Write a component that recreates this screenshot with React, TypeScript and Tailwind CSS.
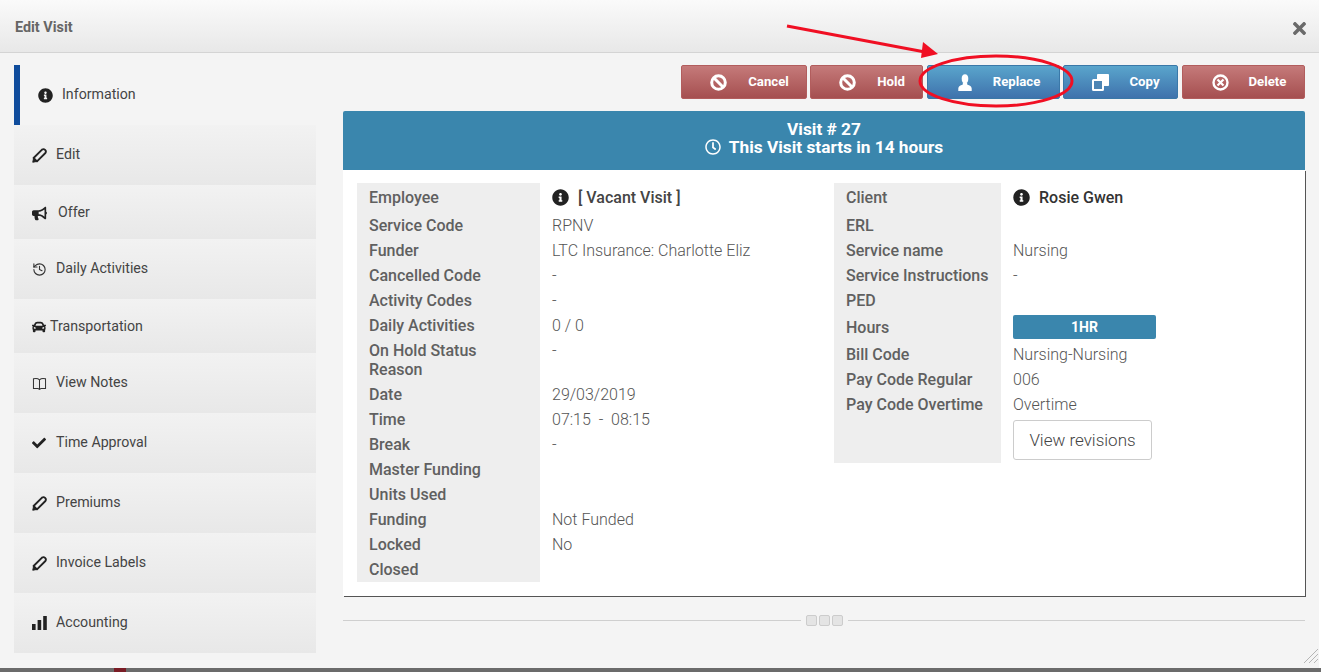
import type { ReactNode } from 'react'
import { History } from 'lucide-react'
import { FaBullhorn, FaCar, FaCheck, FaInfoCircle, FaRegClock, FaTimes } from 'react-icons/fa'

function PencilIcon() {
  return (
    <svg viewBox="0 0 16 16" className="w-[15px] h-[15px] text-[#222]" fill="none" stroke="currentColor">
      <path d="M1.7 10.7 10.7 1.700A2.600 2.600 0 0 1 14.300 5.300L5.300 14.300z" strokeWidth="2" strokeLinejoin="round" />
      <path d="M.8 15.200 1.700 10.700 5.300 14.300z" fill="currentColor" strokeWidth="1" />
    </svg>
  )
}

function BookIcon() {
  return (
    <svg viewBox="0 0 16 14" className="w-[15px] h-[13px] text-[#333]" fill="none" stroke="currentColor" strokeWidth="1.100">
      <path d="M8 3C6.500 1.600 3.500 1.400 1.500 2V12.500H6.500L8 13.300 9.500 12.500H14.500V2C12.500 1.400 9.500 1.600 8 3zM8 3V13.300" />
    </svg>
  )
}

function BarsIcon() {
  return (
    <svg viewBox="0 0 15 14" className="w-[15px] h-[14px] text-[#222]" fill="currentColor">
      <rect x="0" y="8" width="3.600" height="6" />
      <rect x="5.600" y="4" width="3.600" height="10" />
      <rect x="11.200" y="0" width="3.600" height="14" />
    </svg>
  )
}

function BanIcon() {
  return (
    <svg viewBox="0 0 17 17" className="w-[17px] h-[17px]" fill="none" stroke="white" strokeWidth="3">
      <circle cx="8.500" cy="8.500" r="6.800" />
      <path d="M4 4 13 13" />
    </svg>
  )
}

function DeleteIcon() {
  return (
    <svg viewBox="0 0 17 17" className="w-[17px] h-[17px]" fill="none" stroke="white">
      <circle cx="8.500" cy="8.500" r="7" strokeWidth="2.400" />
      <path d="M5.500 5.500 11.500 11.500M11.500 5.500 5.500 11.500" strokeWidth="2.200" />
    </svg>
  )
}

function PersonIcon() {
  return (
    <svg viewBox="0 0 14 17" className="w-[14px] h-[17px]" fill="white">
      <ellipse cx="7" cy="4.800" rx="3.300" ry="4.500" />
      <path d="M5 8.500h4l.4 2.200C11.800 11.300 13.500 12.300 13.700 14.500V17H.3V14.500C.5 12.300 2.200 11.300 4.600 10.700z" />
    </svg>
  )
}

function CopyIcon() {
  return (
    <svg viewBox="0 0 17 17" className="w-[17px] h-[17px]">
      <path d="M5 .8C5 .4 5.400 0 5.800 0h10.400c.4 0 .8.4.8.8v10.400c0 .4-.4.8-.8.8H5z" fill="white" />
      <rect x="1" y="6" width="10" height="10" rx="0.500" fill="#4d85b4" stroke="white" strokeWidth="2" />
    </svg>
  )
}

const navItems: { label: string; icon: ReactNode; h: string; gap: string; pad: string }[] = [
  { label: 'Edit', icon: <PencilIcon />, h: 'h-[60px]', gap: 'gap-[9px]', pad: 'pb-0' },
  { label: 'Offer', icon: <FaBullhorn className="text-[15px] text-[#222]" />, h: 'h-[54px]', gap: 'gap-[11px]', pad: 'pt-[2px]' },
  { label: 'Daily Activities', icon: <History size={15} strokeWidth={1.800} className="text-[#333]" />, h: 'h-[60px]', gap: 'gap-[9px]', pad: 'pb-0' },
  { label: 'Transportation', icon: <FaCar className="text-[14px] text-[#222]" />, h: 'h-[54px]', gap: 'gap-[4px]', pad: 'pt-[2px]' },
  { label: 'View Notes', icon: <BookIcon />, h: 'h-[60px]', gap: 'gap-[9px]', pad: 'pb-0' },
  { label: 'Time Approval', icon: <FaCheck className="text-[14px] text-[#222]" />, h: 'h-[60px]', gap: 'gap-[10px]', pad: 'pb-0' },
  { label: 'Premiums', icon: <PencilIcon />, h: 'h-[60px]', gap: 'gap-[9px]', pad: 'pb-0' },
  { label: 'Invoice Labels', icon: <PencilIcon />, h: 'h-[60px]', gap: 'gap-[9px]', pad: 'pb-0' },
  { label: 'Accounting', icon: <BarsIcon />, h: 'h-[60px]', gap: 'gap-[9px]', pad: 'pb-0' },
]

function ActionButton({ label, icon, width, blue, textGap }: { label: string; icon: ReactNode; width: string; blue?: boolean; textGap: string }) {
  return (
    <button
      className={`${width} ${textGap} h-[34px] pl-[11px] flex items-center justify-center rounded-[2px] border text-white text-[13.200px] font-bold ${
        blue
          ? 'border-[#3a78a8] bg-gradient-to-b from-[#5aa5cc] to-[#3f72ac]'
          : 'border-[#b25d5d] bg-gradient-to-b from-[#c57a7a] to-[#a54f50]'
      }`}
    >
      {icon}
      <span>{label}</span>
    </button>
  )
}

function Row({ label, h, labelW, children, top }: { label: ReactNode; h: string; labelW: string; children?: ReactNode; top?: string }) {
  return (
    <div className={`flex ${h}`}>
      <div className={`${labelW} shrink-0 bg-[#eeeeee] pl-3 font-medium text-[#606060] leading-[19px] flex ${top ?? 'items-center'}`}>
        <span>{label}</span>
      </div>
      <div className={`pl-3 font-light text-[#555] flex ${top ? 'pt-[3px] leading-[19px]' : 'items-center'}`}>{children}</div>
    </div>
  )
}

const leftRows: [string, string][] = [
  ['Service Code', 'RPNV'],
  ['Funder', 'LTC Insurance: Charlotte Eliz'],
  ['Cancelled Code', '-'],
  ['Activity Codes', '-'],
  ['Daily Activities', '0 / 0'],
]

const leftRowsAfter: [string, string][] = [
  ['Date', '29/03/2019'],
  ['Time', '07:15  -  08:15'],
  ['Break', '-'],
  ['Master Funding', ''],
  ['Units Used', ''],
  ['Funding', 'Not Funded'],
  ['Locked', 'No'],
  ['Closed', ''],
]

export default function App() {
  return (
    <div className="relative h-[672px] w-[1321px] overflow-hidden bg-white text-[16px]" style={{ fontFamily: 'Roboto, "Liberation Sans", sans-serif' }}>
      <div className="w-[1319px] h-[668px] flex flex-col bg-[#f4f4f4]">
        {/* Title bar */}
        <div className="h-[53px] shrink-0 flex items-center justify-between pt-[4px] pl-[15px] pr-[10px] border-b border-[#d4d4d4] bg-gradient-to-b from-[#fafafa] to-[#e8e8e8]">
          <span className="text-[14.400px] font-bold text-[#666]">Edit Visit</span>
          <FaTimes className="text-[19px] text-[#6a6a6a]" />
        </div>

        <div className="flex flex-1 pt-3 pl-[14px]">
          {/* Side tabs */}
          <nav className="w-[302px] shrink-0 text-[14.200px] text-[#444]">
            <div className="h-[60px] flex items-center gap-[9px] border-l-[6px] border-[#0f4c9c] pl-[18px]">
              <FaInfoCircle className="text-[15px] text-[#222]" />
              <span>Information</span>
            </div>
            {navItems.map(item => (
              <div
                key={item.label}
                className={`${item.h} ${item.gap} ${item.pad} flex items-center pl-[18px] bg-gradient-to-b from-[#f2f2f2] to-[#e8e8e8]`}
              >
                {item.icon}
                <span>{item.label}</span>
              </div>
            ))}
          </nav>

          <div className="ml-[27px] w-[962px]">
            {/* Actions */}
            <div className="flex justify-end gap-[3px] h-[34px]">
              <ActionButton label="Cancel" width="w-[126px]" textGap="gap-[21px]" icon={<BanIcon />} />
              <ActionButton label="Hold" width="w-[113px]" textGap="gap-[21px]" icon={<BanIcon />} />
              <ActionButton label="Replace" blue width="w-[133px] ml-[1px]" textGap="gap-[21px]" icon={<PersonIcon />} />
              <ActionButton label="Copy" blue width="w-[115px]" textGap="gap-[20px]" icon={<CopyIcon />} />
              <ActionButton label="Delete" width="w-[123px] ml-[1px]" textGap="gap-[20px]" icon={<DeleteIcon />} />
            </div>

            {/* Visit banner */}
            <div className="mt-3 h-[59px] pb-[6px] rounded-t-[2px] bg-[#3a86ad] text-white text-[17.300px] font-bold flex flex-col items-center justify-center leading-[18px]">
              <div>Visit # 27</div>
              <div className="flex items-center gap-[8px]">
                <FaRegClock className="text-[16px]" />
                <span>This Visit starts in 14 hours</span>
              </div>
            </div>

            {/* Details */}
            <div className="h-[426px] bg-white pt-[13px] pl-[14px] flex shadow-[1px_1px_0_#555]">
              <div className="w-[477px] shrink-0">
                <Row label="Employee" h="h-[30px]" labelW="w-[183px]" top="pt-[5px]">
                  <span className="self-start flex items-center gap-[9px] font-medium text-[#444] pt-[2px]">
                    <FaInfoCircle className="text-[17px] text-[#222]" />[ Vacant Visit ]
                  </span>
                </Row>
                {leftRows.map(([label, value]) => (
                  <Row key={label} label={label} h="h-[25px]" labelW="w-[183px]">{value}</Row>
                ))}
                <Row label={<>On Hold Status<br />Reason</>} h="h-[44px]" labelW="w-[183px]" top="pt-[3px]">-</Row>
                {leftRowsAfter.map(([label, value]) => (
                  <Row key={label} label={label} h="h-[25px]" labelW="w-[183px]">
                    <span className="whitespace-pre">{value}</span>
                  </Row>
                ))}
              </div>
              <div>
                <Row label="Client" h="h-[30px]" labelW="w-[167px]" top="pt-[5px]">
                  <span className="self-start flex items-center gap-[9px] font-medium text-[#333] pt-[2px]">
                    <FaInfoCircle className="text-[17px] text-[#222]" />Rosie Gwen
                  </span>
                </Row>
                <Row label="ERL" h="h-[25px]" labelW="w-[167px]" />
                <Row label="Service name" h="h-[25px]" labelW="w-[167px]">Nursing</Row>
                <Row label="Service Instructions" h="h-[25px]" labelW="w-[167px]">-</Row>
                <Row label="PED" h="h-[25px]" labelW="w-[167px]" />
                <Row label="Hours" h="h-[28px]" labelW="w-[167px]">
                  <span className="w-[143px] h-[24px] rounded-[2px] bg-[#3a86ad] text-white text-[14px] font-bold flex items-center justify-center">1HR</span>
                </Row>
                <Row label="Bill Code" h="h-[26px]" labelW="w-[167px]"><span className="pt-[1px]">Nursing-Nursing</span></Row>
                <Row label="Pay Code Regular" h="h-[25px]" labelW="w-[167px]">006</Row>
                <Row label="Pay Code Overtime" h="h-[25px]" labelW="w-[167px]">Overtime</Row>
                <Row label="" h="h-[46px]" labelW="w-[167px]">
                  <button className="h-[40px] w-[139px] pt-[1px] rounded-[3px] border border-[#ccc] bg-white text-[#444] text-[17px] font-light">View revisions</button>
                </Row>
              </div>
            </div>

            {/* Splitter */}
            <div className="mt-[19px] flex items-center gap-[5px]">
              <div className="flex-1 h-px bg-[#cfcfcf]" />
              <div className="flex gap-[2px]">
                <span className="w-[11px] h-[11px] rounded-[2px] border border-[#ccc] bg-[#e4e4e4]" />
                <span className="w-[11px] h-[11px] rounded-[2px] border border-[#ccc] bg-[#e4e4e4]" />
                <span className="w-[11px] h-[11px] rounded-[2px] border border-[#ccc] bg-[#e4e4e4]" />
              </div>
              <div className="flex-1 h-px bg-[#cfcfcf]" />
            </div>
          </div>
        </div>
      </div>

      {/* Strip of the page behind the dialog */}
      <div className="h-[4px] bg-[#6b6b6b] flex">
        <div className="ml-[114px] w-[12px] bg-[#7a1c25]" />
      </div>

      {/* Resize grip */}
      <svg className="absolute left-[1303px] top-[648px]" width="16" height="16" stroke="#b5b5b5" strokeWidth="1">
        <path d="M1 15 15 1M6 15l9-9M11 15l4-4" />
      </svg>

      {/* Red annotation */}
      <svg className="absolute inset-0 pointer-events-none" width="1321" height="672" fill="none">
        <path d="M787 26 925 52" stroke="#f00f23" strokeWidth="3" />
        <path d="M923 42 938 54 921 58z" fill="#f00f23" />
        <ellipse cx="996" cy="81" rx="76" ry="25" stroke="#f00f23" strokeWidth="3" />
      </svg>
    </div>
  )
}
